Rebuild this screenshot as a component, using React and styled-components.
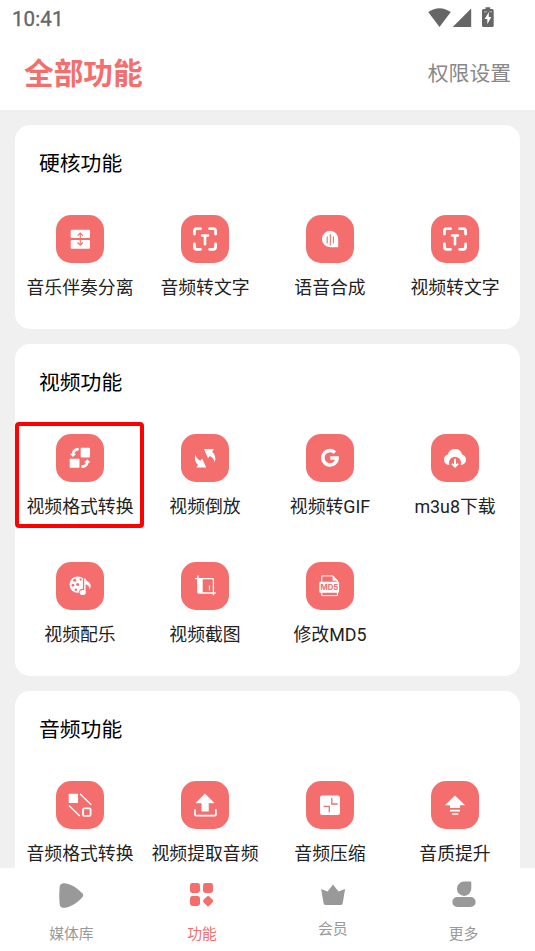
import React from 'react';
import styled, { createGlobalStyle } from 'styled-components';

const RED = '#f56e6e';

const GlobalStyle = createGlobalStyle`
  * { box-sizing: border-box; }
  body {
    margin: 0;
    background: #f0f0f0;
    font-family: Roboto, "Noto Sans CJK SC", sans-serif;
  }
`;

const Screen = styled.div`
  display: flex;
  flex-direction: column;
  height: 951px;
  overflow: hidden;
  background: #f0f0f0;
`;

const StatusBar = styled.div`
  display: flex;
  justify-content: space-between;
  flex: none;
  height: 37px;
  padding: 7px 41px 0 12px;
  background: #fff;
`;

const Clock = styled.span`
  font-size: 20.5px;
  line-height: 24px;
  font-weight: 400;
  -webkit-text-stroke: 0.35px #666;
  letter-spacing: 0.1px;
  color: #666;
`;

const StatusIcons = styled.svg`
  display: block;
  width: 66px;
  height: 21px;
  fill: #666;
`;

const Header = styled.header`
  display: flex;
  align-items: center;
  justify-content: space-between;
  flex: none;
  height: 73px;
  padding: 0 24px;
  background: #fff;
`;

const PageTitle = styled.h1`
  margin: 0;
  font-size: 29.7px;
  line-height: 40px;
  font-weight: 700;
  color: ${RED};
`;

const PermissionLink = styled.a`
  font-size: 20.8px;
  line-height: 30px;
  color: #888;
`;

const Content = styled.main`
  display: flex;
  flex-direction: column;
  gap: 15px;
  flex: 1;
  min-height: 0;
  overflow: hidden;
  padding: 15px 15px 0;
`;

const Card = styled.section`
  flex: none;
  padding: 24px 2.5px 26.5px;
  border-radius: 15px;
  background: #fff;
`;

const CardTitle = styled.h2`
  margin: 0 0 36px 21.5px;
  font-size: 20.8px;
  line-height: 30px;
  font-weight: 400;
  color: #000;
`;

const Grid = styled.div`
  display: grid;
  grid-template-columns: repeat(4, 125px);
  row-gap: 40.5px;
`;

const Feature = styled.div`
  position: relative;
  display: flex;
  flex-direction: column;
  align-items: center;
  height: 87.5px;
`;

const Tile = styled.svg`
  flex: none;
  width: 48px;
  height: 48px;
  border-radius: 15px;
  background: ${RED};
  fill: #fff;
`;

const FeatureLabel = styled.span`
  margin-top: 12px;
  font-size: 17.85px;
  line-height: 26px;
  white-space: nowrap;
  color: #222;
`;

const Highlight = styled.div`
  position: absolute;
  left: -2.5px;
  top: -12px;
  width: 129px;
  height: 106px;
  border: 4px solid #fe0000;
  border-radius: 4px;
`;

const Nav = styled.nav`
  display: grid;
  grid-template-columns: repeat(4, 1fr);
  flex: none;
  height: 83px;
  padding: 0 6px;
  background: #fff;
`;

const NavItem = styled.div`
  display: flex;
  flex-direction: column;
  align-items: center;
  padding-top: 12px;
  color: ${(p) => (p.$active ? RED : '#999')};
`;

const NavIcon = styled.svg`
  width: 28px;
  height: 30px;
  fill: currentColor;
`;

const NavLabel = styled.span`
  margin-top: ${(p) => (p.$raised ? 8 : 13)}px;
  font-size: 14.8px;
  line-height: 22px;
`;

const line = (color, width, extra) => ({
  fill: 'none', stroke: color, strokeWidth: width, ...extra,
});

const scanText = (
  <g {...line('#fff', 2.8, { strokeLinecap: 'round' })}>
    <path d="M13.4 19V16.2a2.5 2.5 0 0 1 2.5-2.5H19.5M28.5 13.7H32.1a2.5 2.5 0 0 1 2.5 2.5V19M34.6 29V31.8a2.5 2.5 0 0 1-2.5 2.5H28.5M19.5 34.3H15.9a2.5 2.5 0 0 1-2.5-2.5V29" />
    <path d="M21 20.5H27M24 20.5V29.2" strokeWidth="2.6" />
  </g>
);

const icons = {
  split: (
    <>
      <rect x="14.7" y="14.7" width="19.3" height="8.3" rx="1.2" />
      <rect x="14.7" y="25" width="19.3" height="8.8" rx="1.2" />
      <path d="M24.3 18V30.3M21.6 20.8 24.3 18 27 20.8M21.6 27.5 24.3 30.3 27 27.5" {...line(RED, 1.1)} />
    </>
  ),
  scanText,
  speech: (
    <>
      <path d="M24.2 15.7A8.2 8.2 0 0 0 24.2 32.3H32.2V24A8.1 8.1 0 0 0 24.2 15.7Z" />
      <path d="M21.2 21.8V28M24.3 19.5V30M27.4 21.8V28" {...line(RED, 1.1, { strokeLinecap: 'round' })} />
    </>
  ),
  swap: (
    <>
      <rect x="24.7" y="13.8" width="9.3" height="9.6" rx="0.8" />
      <rect x="13.7" y="24.8" width="9.8" height="9" rx="0.8" />
      <path d="M22.7 13.8V16.4C20.2 16.6 18.7 17.8 18.4 19.8H20.2L17 23 13.8 19.8H15.8C16.2 16.2 18.5 13.9 22.7 13.8Z" />
      <path d="M25.4 33.9V31.3C28.4 31 29.7 30 30 28.4H28.1L31.3 25.2 34.4 28.4H32.6C32.1 32 29.6 33.8 25.4 33.9Z" />
    </>
  ),
  reverse: (
    <>
      <path d="M23 15.1H32.9L31.2 17.7C34.3 20.5 35 24 33.8 28.4 33.2 25.3 31.8 23.5 28.9 21.9L27 24.2Z" />
      <path d="M23 15.1H32.9L31.2 17.7C34.3 20.5 35 24 33.8 28.4 33.2 25.3 31.8 23.5 28.9 21.9L27 24.2Z" transform="rotate(180 24.1 24.3)" />
    </>
  ),
  gif: <path d="M29 18.6A7.2 7.2 0 1 0 31.2 24H24.3" {...line('#fff', 3.5)} />,
  cloud: (
    <>
      <path d="M16.5 30.8A5.4 5.4 0 0 1 16.8 20.6 7.4 7.4 0 0 1 31.2 20.6 5.4 5.4 0 0 1 31.5 30.8Z" />
      <circle cx="24" cy="28.7" r="6" fill={RED} />
      <path d="M24 24.8V32.2M20.9 29.6 24 32.6 27.1 29.6" {...line('#fff', 1.9)} />
    </>
  ),
  music: (
    <>
      <circle cx="21.7" cy="22.6" r="8.2" />
      <g fill={RED}>
        <circle cx="21.7" cy="22.6" r="1.5" />
        <circle cx="18.7" cy="18.2" r="1.5" />
        <circle cx="17" cy="23.3" r="1.4" />
        <circle cx="19.8" cy="27.8" r="1.2" />
        <circle cx="24.6" cy="17.6" r="1.1" />
      </g>
      <path d="M28.4 17V29.5" {...line(RED, 3)} />
      <circle cx="26.7" cy="30.4" r="3.7" fill={RED} />
      <ellipse cx="26.7" cy="30.5" rx="3" ry="2.6" />
      <path d="M28.2 30.5V16.6H29.6C29.8 19.7 34.8 20 34.7 24 34.6 25.6 34 26.5 33.3 27.2 33.7 24.5 32 23 29.6 22.3V30.5Z" />
    </>
  ),
  crop: (
    <>
      <rect x="16.5" y="16.2" width="5.2" height="14.8" rx="1" />
      <path d="M14 16.7H31.2a1.2 1.2 0 0 1 1.2 1.2V33.3M17 13.5V30a1 1 0 0 0 1 1H34.7" {...line('#fff', 1.3)} />
      <path d="M28.4 23.5V28.3" {...line('#fff', 1)} />
    </>
  ),
  md5: (
    <>
      <path d="M15.8 20V13.9H27L31.4 18.4V33.6H15.8V29" {...line('#fff', 1)} />
      <path d="M31.4 18V31" {...line('#fff', 1)} />
      <path d="M26.6 13.4 31.9 18.8H26.6Z" />
      <rect x="13.3" y="19.7" width="19.8" height="11" rx="1.2" />
      <text x="23.3" y="28.3" fill={RED} fontFamily="Inter, sans-serif" fontSize="8.2" fontWeight="700" textAnchor="middle" textLength="17.6" lengthAdjust="spacingAndGlyphs">MD5</text>
    </>
  ),
  audioFormat: (
    <>
      <rect x="12.7" y="12.7" width="9.3" height="9.4" rx="0.9" />
      <rect x="27" y="27.3" width="7.6" height="7.5" rx="1.3" {...line('#fff', 1.8)} />
      <path d="M24.2 12.9 35.2 23.7M12.9 24.4 23.8 35.1" {...line('#fff', 1.4)} />
    </>
  ),
  extract: (
    <>
      <path d="M24 12.7 33.2 22H27.6V30.3H20.7V22H14.8Z" strokeLinejoin="round" stroke="#fff" strokeWidth="0.4" />
      <path d="M14 28.2V33.4a1.2 1.2 0 0 0 1.2 1.2H33.7a1.2 1.2 0 0 0 1.2-1.2V28.2" {...line('#fff', 1.8)} />
    </>
  ),
  compress: (
    <>
      <rect x="14" y="14.6" width="20" height="19.5" rx="2.3" />
      <path d="M25.8 16.8V23H31.7M17.6 25.3H23.3V31.3" {...line(RED, 1.3)} />
    </>
  ),
  boost: (
    <>
      <path d="M24 14.6 34.1 24.3H29V27.1H19V24.3H13.9Z" />
      <rect x="19" y="28.8" width="10" height="1.7" rx="0.5" />
      <rect x="20.8" y="32.2" width="6.6" height="1.6" rx="0.5" />
    </>
  ),
};

const sections = [
  {
    title: '硬核功能',
    items: [['音乐伴奏分离', 'split'], ['音频转文字', 'scanText'], ['语音合成', 'speech'], ['视频转文字', 'scanText']],
  },
  {
    title: '视频功能',
    items: [
      ['视频格式转换', 'swap', true], ['视频倒放', 'reverse'], ['视频转GIF', 'gif'], ['m3u8下载', 'cloud'],
      ['视频配乐', 'music'], ['视频截图', 'crop'], ['修改MD5', 'md5'],
    ],
  },
  {
    title: '音频功能',
    items: [['音频格式转换', 'audioFormat'], ['视频提取音频', 'extract'], ['音频压缩', 'compress'], ['音质提升', 'boost']],
  },
];

const navItems = [
  { label: '媒体库', icon: <path d="M2.6 7.2C2.9 4.3 4.8 2.8 7.8 3.3 14.6 4.4 20.7 8.4 25.6 13.6Q27 15.2 25.6 16.9C20.8 22.3 14.7 26.4 8.3 27.7 4.8 28.4 3 26.8 2.6 23.9Q1.9 15.5 2.6 7.2Z" /> },
  {
    label: '功能',
    active: true,
    icon: (
      <>
        <rect x="2" y="3" width="10" height="10" rx="2.4" />
        <rect x="15" y="3" width="10" height="10" rx="2.4" />
        <rect x="2" y="16" width="10" height="10" rx="2.4" />
        <rect x="16" y="17" width="8.2" height="8.2" rx="1.8" transform="rotate(45 20.1 21.1)" />
      </>
    ),
  },
  { label: '会员', raised: true, icon: <path d="M2.1 9.1 8.6 11.5 14 4.5 19.5 11.5 26.1 9.1 23.7 23.2Q23.3 25.1 21.5 25.1H6.7Q5 25.1 4.6 23.2Z" /> },
  {
    label: '更多',
    icon: (
      <>
        <path d="M14 1.5H20.3Q21.3 1.5 21.3 2.5V8.6A7.2 7.2 0 1 1 14 1.5Z" />
        <rect x="2.3" y="17" width="23.3" height="10" rx="5" />
      </>
    ),
  },
];

export default function App() {
  return (
    <Screen>
      <GlobalStyle />
      <StatusBar>
        <Clock>10:41</Clock>
        <StatusIcons viewBox="428 7 66 21">
          <path d="M428.2 12Q439.5 4.4 450.8 12L439.5 27Z" />
          <path d="M471.2 8.5V27H452.7Z" />
          <path d="M485.5 7.2H490.2V9H492.2Q493.7 9 493.7 10.5V25.4Q493.7 27 492.2 27H483.6Q482 27 482 25.4V10.5Q482 9 483.6 9H485.5Z" />
          <path d="M488.8 12 484.7 19H487.3V24.3L491.3 17H488.8Z" fill="#fff" />
          <path d="M484 11.8H487M489.5 11.8H492" stroke="#bbb" />
        </StatusIcons>
      </StatusBar>
      <Header>
        <PageTitle>全部功能</PageTitle>
        <PermissionLink>权限设置</PermissionLink>
      </Header>
      <Content>
        {sections.map((section) => (
          <Card key={section.title}>
            <CardTitle>{section.title}</CardTitle>
            <Grid>
              {section.items.map(([label, icon, highlighted]) => (
                <Feature key={label}>
                  <Tile viewBox="0 0 48 48">{icons[icon]}</Tile>
                  <FeatureLabel>{label}</FeatureLabel>
                  {highlighted && <Highlight />}
                </Feature>
              ))}
            </Grid>
          </Card>
        ))}
      </Content>
      <Nav>
        {navItems.map((item) => (
          <NavItem key={item.label} $active={item.active}>
            <NavIcon viewBox="0 0 28 30">{item.icon}</NavIcon>
            <NavLabel $raised={item.raised}>{item.label}</NavLabel>
          </NavItem>
        ))}
      </Nav>
    </Screen>
  );
}
